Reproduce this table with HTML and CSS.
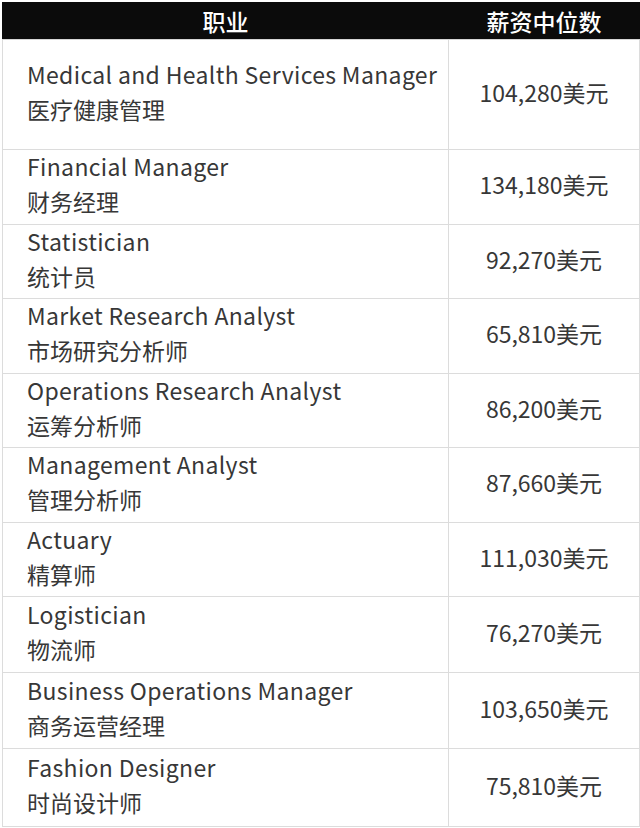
FILE: index.html
```html
<!DOCTYPE html>
<html lang="zh-CN">
<head>
<meta charset="utf-8">
<link rel="stylesheet" href="styles.css">
</head>
<body>
<table class="salary">
  <thead>
    <tr><th class="col-job">职业</th><th class="col-pay">薪资中位数</th></tr>
  </thead>
  <tbody>
    <tr class="tall"><td class="job"><div class="en">Medical and Health Services Manager</div><div class="zh">医疗健康管理</div></td><td class="pay"><div class="amt">104,280美元</div></td></tr>
    <tr><td class="job"><div class="en">Financial Manager</div><div class="zh">财务经理</div></td><td class="pay"><div class="amt">134,180美元</div></td></tr>
    <tr><td class="job"><div class="en">Statistician</div><div class="zh">统计员</div></td><td class="pay"><div class="amt">92,270美元</div></td></tr>
    <tr><td class="job"><div class="en">Market Research Analyst</div><div class="zh">市场研究分析师</div></td><td class="pay"><div class="amt">65,810美元</div></td></tr>
    <tr><td class="job"><div class="en">Operations Research Analyst</div><div class="zh">运筹分析师</div></td><td class="pay"><div class="amt">86,200美元</div></td></tr>
    <tr><td class="job"><div class="en">Management Analyst</div><div class="zh">管理分析师</div></td><td class="pay"><div class="amt">87,660美元</div></td></tr>
    <tr><td class="job"><div class="en">Actuary</div><div class="zh">精算师</div></td><td class="pay"><div class="amt">111,030美元</div></td></tr>
    <tr><td class="job"><div class="en">Logistician</div><div class="zh">物流师</div></td><td class="pay"><div class="amt">76,270美元</div></td></tr>
    <tr><td class="job"><div class="en">Business Operations Manager</div><div class="zh">商务运营经理</div></td><td class="pay"><div class="amt">103,650美元</div></td></tr>
    <tr><td class="job"><div class="en">Fashion Designer</div><div class="zh">时尚设计师</div></td><td class="pay"><div class="amt">75,810美元</div></td></tr>
  </tbody>
</table>
</body>
</html>
```
FILE: styles.css
```css
html, body {
  margin: 0;
  padding: 0;
  background: #ffffff;
}
body {
  padding: 2px 1px 0 2px;
  font-family: "Noto Sans CJK SC", "Noto Sans", sans-serif;
  color: #373737;
}
.salary {
  border-collapse: collapse;
  width: 638px;
  table-layout: fixed;
}
.salary th {
  background: #0b0b0b;
  color: #ffffff;
  font-weight: 500;
  font-size: 23px;
  height: 36px;
  padding: 0;
  line-height: 34px;
  border: 1px solid #0b0b0b;
  border-bottom: 1px solid #d6d6d6;
}
.col-job { width: 445px; }
.salary td {
  border: 1px solid #dcdcdc;
  font-size: 23px;
  padding: 0;
  vertical-align: middle;
  height: 73.5px;
}
.salary tr.tall td { height: 109px; }
.salary tbody tr:nth-child(8) td,
.salary tbody tr:nth-child(9) td { height: 75px; }
.salary tbody tr:nth-child(10) td { height: 77px; }
.salary td.job { padding-left: 24px; }
.en { letter-spacing: 0.35px; line-height: 33px; }
.zh { line-height: 37px; margin-bottom: 3px; }
.salary td.pay { text-align: center; }
.amt { line-height: 37px; margin-bottom: 4px; }
```
